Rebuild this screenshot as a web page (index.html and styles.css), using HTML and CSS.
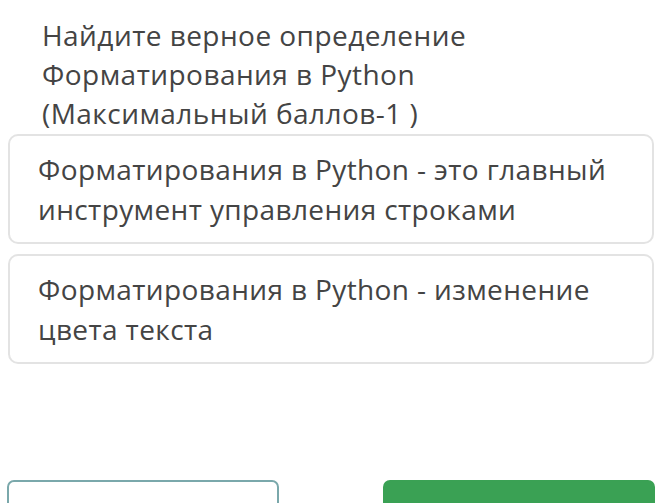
FILE: index.html
```html
<!DOCTYPE html>
<html lang="ru">
<head>
  <meta charset="UTF-8">
  <meta name="viewport" content="width=device-width, initial-scale=1.0">
  <title>Вопрос</title>
  <link rel="stylesheet" href="styles.css">
</head>
<body>
  <div class="question">
    <p class="question-text">Найдите верное определение Форматирования в Python (Максимальный баллов-1 )</p>
    <div class="answers">
      <div class="answer">Форматирования в Python - это главный инструмент управления строками</div>
      <div class="answer">Форматирования в Python - изменение цвета текста</div>
    </div>
    <div class="actions">
      <button class="btn btn-outline"></button>
      <button class="btn btn-primary"></button>
    </div>
  </div>
</body>
</html>
```

FILE: styles.css
```css
body {
  font-family: 'Open Sans', sans-serif;
  margin: 0;
  padding: 0;
  background: #fff;
  color: #444;
  overflow: hidden;
}

.question {
  width: 658px;
}

.question-text {
  margin: 0;
  padding: 16px 170px 1px 42px;
  font-size: 28px;
  line-height: 39px;
  letter-spacing: 0.45px;
}

.answers {
  display: flex;
  flex-direction: column;
  gap: 10px;
  margin: 0 4px 0 8px;
}

.answer {
  border: 2px solid #e3e3e3;
  border-radius: 10px;
  padding: 13px 28px;
  font-size: 28px;
  line-height: 40px;
  letter-spacing: 0.38px;
}

.actions {
  display: flex;
  justify-content: space-between;
  margin-top: 116px;
  padding: 0 3px 0 7px;
}

.btn {
  width: 272px;
  height: 60px;
  border-radius: 7px;
  font-family: inherit;
}

.btn-outline {
  background: #fff;
  border: 2px solid #7aa8ab;
}

.btn-primary {
  background: #3aa154;
  border: none;
}
```
